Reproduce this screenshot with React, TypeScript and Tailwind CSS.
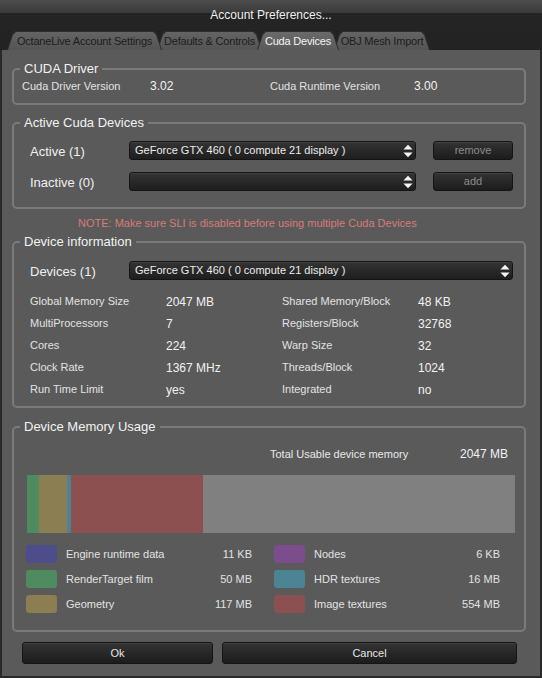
import React from 'react';

// memory usage figures shown in the legend and the bar
const memory = [
  { label: 'Engine runtime data', value: '11 KB', mb: 0.011, color: '#4d4d8b' },
  { label: 'Nodes', value: '6 KB', mb: 0.006, color: '#7b4d8d' },
  { label: 'RenderTarget film', value: '50 MB', mb: 50, color: '#4f8b5e' },
  { label: 'HDR textures', value: '16 MB', mb: 16, color: '#4c8494' },
  { label: 'Geometry', value: '117 MB', mb: 117, color: '#8a7e52' },
  { label: 'Image textures', value: '554 MB', mb: 554, color: '#8d5050' },
];
const barOrder = ['Engine runtime data', 'RenderTarget film', 'Geometry', 'HDR textures', 'Image textures', 'Nodes'];
const TOTAL_MB = 2047;
const BAR_W = 488;

const deviceInfo: [string, string, string, string][] = [
  ['Global Memory Size', '2047 MB', 'Shared Memory/Block', '48 KB'],
  ['MultiProcessors', '7', 'Registers/Block', '32768'],
  ['Cores', '224', 'Warp Size', '32'],
  ['Clock Rate', '1367 MHz', 'Threads/Block', '1024'],
  ['Run Time Limit', 'yes', 'Integrated', 'no'],
];

const tabs = [
  { name: 'OctaneLive Account Settings', w: 'w-[155px]', z: 'z-[3]', active: false },
  { name: 'Defaults & Controls', w: 'w-[105px]', z: 'z-[2]', active: false },
  { name: 'Cuda Devices', w: 'w-[82px]', z: 'z-[10]', active: true },
  { name: 'OBJ Mesh Import', w: 'w-[96px]', z: 'z-[1]', active: false },
];

function Spinner() {
  return (
    <svg width="10" height="14" viewBox="0 0 10 14">
      <path d="M5 0.8 L9.6 5.6 H0.4 Z" fill="#f4f4f4" />
      <path d="M0.4 8.4 H9.6 L5 13.2 Z" fill="#f4f4f4" />
    </svg>
  );
}

function Select({ text, className }: { text?: string; className: string }) {
  return (
    <div className={`h-[19px] flex items-center justify-between rounded-[3px] border border-[#141414] bg-gradient-to-b from-[#343434] to-[#1e1e1e] pl-[5px] pr-[2px] text-[11px] leading-[15px] text-[#ececec] shadow-[inset_0_1px_0_rgba(255,255,255,0.06)] ${className}`}>
      <span>{text}</span>
      <Spinner />
    </div>
  );
}

function DarkButton({ label, className, dim }: { label: string; className: string; dim?: boolean }) {
  return (
    <button className={`flex items-center justify-center rounded-[3px] border border-[#141414] bg-gradient-to-b from-[#343434] to-[#1c1c1c] text-[11px] leading-[15px] shadow-[inset_0_1px_0_rgba(255,255,255,0.07)] ${dim ? 'text-[#8c8c8c]' : 'text-[#e6e6e6]'} ${className}`}>
      {label}
    </button>
  );
}

function Group({ title, className, children }: { title: string; className?: string; children: React.ReactNode }) {
  return (
    <fieldset className={`w-[514px] rounded-[5px] border-2 border-[#7a7a7a] p-0 ${className ?? ''}`}>
      <legend className="ml-[6px] px-[4px] text-[13px] leading-[14px] text-[#f2f2f2]">{title}</legend>
      {children}
    </fieldset>
  );
}

function Tab({ name, w, z, active, first }: { name: string; w: string; z: string; active: boolean; first: boolean }) {
  // outer shape is the dark outline, inner shape is the face of the tab
  return (
    <div className={`relative ${z} ${first ? '' : '-ml-[5px]'} ${w} h-[19px] bg-[#2e2e2e] px-px pt-px [clip-path:polygon(0_100%,5px_3px,8px_0,calc(100%_-_8px)_0,calc(100%_-_5px)_3px,100%_100%)]`}>
      <div
        className={`h-full flex items-center justify-center text-[11px] leading-[15px] tracking-[-0.2px] [clip-path:polygon(0_100%,5px_3px,8px_0,calc(100%_-_8px)_0,calc(100%_-_5px)_3px,100%_100%)] ${
          active ? 'bg-gradient-to-b from-[#6a6a6a] to-[#5a5a5a] text-[#f4f4f4]' : 'bg-gradient-to-b from-[#646464] to-[#545454] text-[#1c1c1c]'
        }`}
      >
        {name}
      </div>
    </div>
  );
}

export default function App() {
  const byLabel = (l: string) => memory.find(m => m.label === l)!;

  return (
    <div className="w-[542px] h-[678px] flex flex-col bg-[#232323] [font-family:'Liberation_Sans',Arial,sans-serif] select-none">
      {/* title bar */}
      <div className="h-[30px] flex justify-center bg-[linear-gradient(to_bottom,#4d4d4d,#3a3a3a_13px,#242424_13px)]">
        <span className="mt-[7px] text-[12px] leading-[16px] text-[#f0f0f0]">Account Preferences...</span>
      </div>

      {/* tabs */}
      <div className="h-[20px] flex items-end pl-[7px]">
        {tabs.map((t, i) => (
          <Tab key={t.name} {...t} first={i === 0} />
        ))}
      </div>

      {/* content */}
      <div className="flex-1 flex flex-col bg-[#5a5a5a] border-x-2 border-b-2 border-[#2a2a2a] px-[10px]">
        <Group title="CUDA Driver" className="mt-[12px]">
          <div className="grid grid-cols-[128px_120px_144px_1fr] items-center h-[16px] mt-[2px] mb-[9px] pl-[8px] leading-[16px]">
            <span className="text-[11px] text-[#e2e2e2]">Cuda Driver Version</span>
            <span className="text-[12px] text-[#f2f2f2]">3.02</span>
            <span className="text-[11px] text-[#e2e2e2]">Cuda Runtime Version</span>
            <span className="text-[12px] text-[#f2f2f2]">3.00</span>
          </div>
        </Group>

        <Group title="Active Cuda Devices" className="mt-[11px]">
          <div className="flex flex-col gap-[12px] pt-[11px] pb-[16px] pl-[16px]">
            <div className="flex items-center h-[19px]">
              <span className="w-[99px] text-[13px] leading-[19px] text-[#f0f0f0] translate-y-[1px]">Active (1)</span>
              <Select text="GeForce GTX 460 ( 0 compute 21 display )" className="w-[287px]" />
              <DarkButton label="remove" dim className="ml-[17px] w-[80px] h-[19px]" />
            </div>
            <div className="flex items-center h-[19px]">
              <span className="w-[99px] text-[13px] leading-[19px] text-[#f0f0f0] translate-y-[1px]">Inactive (0)</span>
              <Select className="w-[287px]" />
              <DarkButton label="add" dim className="ml-[17px] w-[80px] h-[19px]" />
            </div>
          </div>
        </Group>

        <div className="mt-[7px] h-[14px] pl-[66px] text-[11px] leading-[14px] text-[#d67c78]">
          NOTE: Make sure SLI is disabled before using multiple Cuda Devices
        </div>

        <Group title="Device information" className="mt-[5px]">
          <div className="pt-[12px] pb-[6px] pl-[16px]">
            <div className="flex items-center h-[19px]">
              <span className="w-[99px] text-[13px] leading-[19px] text-[#f0f0f0] translate-y-[1px]">Devices (1)</span>
              <Select text="GeForce GTX 460 ( 0 compute 21 display )" className="w-[384px]" />
            </div>
            <div className="mt-[10px] grid grid-cols-[136px_116px_136px_1fr] auto-rows-[22px] items-center leading-[16px]">
              {deviceInfo.map(row => (
                <React.Fragment key={row[0]}>
                  <span className="text-[11px] text-[#e2e2e2]">{row[0]}</span>
                  <span className="text-[12px] text-[#f2f2f2] translate-y-[1px]">{row[1]}</span>
                  <span className="text-[11px] text-[#e2e2e2]">{row[2]}</span>
                  <span className="text-[12px] text-[#f2f2f2] translate-y-[1px]">{row[3]}</span>
                </React.Fragment>
              ))}
            </div>
          </div>
        </Group>

        <Group title="Device Memory Usage" className="mt-[12px]">
          <div className="pt-[12px] pb-[17px] pl-[12px]">
            <div className="h-[16px] flex items-center pl-[244px] leading-[16px]">
              <span className="w-[190px] text-[11px] text-[#e8e8e8]">Total Usable device memory</span>
              <span className="text-[12px] text-[#f2f2f2]">2047 MB</span>
            </div>
            <div className="mt-[13px] ml-px w-[488px] h-[58px] flex bg-[#808080]">
              {barOrder.map(l => {
                const m = byLabel(l);
                return <div key={l} className="h-full" style={{ width: (m.mb / TOTAL_MB) * BAR_W, backgroundColor: m.color }} />;
              })}
            </div>
            <div className="mt-[12px] grid grid-cols-[226px_226px] gap-x-[22px] gap-y-[7px]">
              {memory.map(m => (
                <div key={m.label} className="h-[18px] flex items-center leading-[16px]">
                  <div className="w-[31px] h-[18px] rounded-[3px]" style={{ backgroundColor: m.color }} />
                  <span className="ml-[9px] flex-1 text-[11px] text-[#e2e2e2]">{m.label}</span>
                  <span className="text-[11px] text-[#e2e2e2]">{m.value}</span>
                </div>
              ))}
            </div>
          </div>
        </Group>

        <div className="mt-[10px] flex gap-[9px] pl-[10px]">
          <DarkButton label="Ok" className="w-[191px] h-[22px]" />
          <DarkButton label="Cancel" className="w-[295px] h-[22px]" />
        </div>
      </div>
    </div>
  );
}
